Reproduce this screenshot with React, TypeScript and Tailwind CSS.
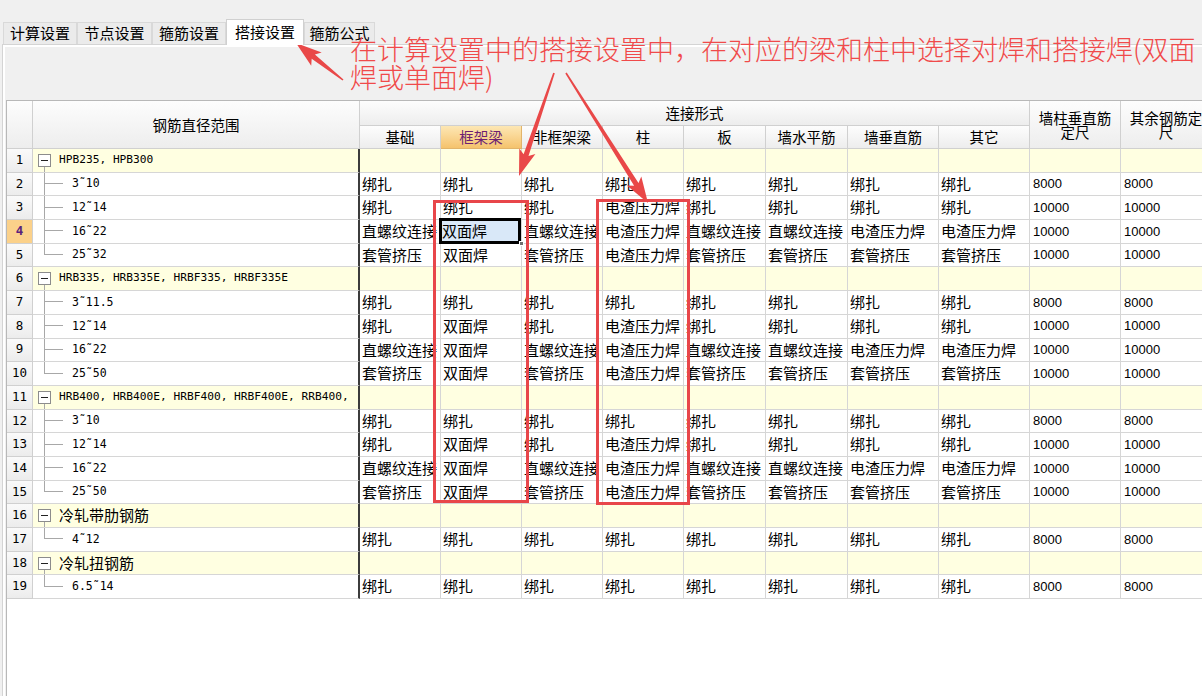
import React from "react";

type Row = {
  n: number;
  label: string;
  group?: boolean;
  cjk?: boolean;
  last?: boolean;
  cells?: string[];
  nums?: [string, string];
};

const B = "绑扎";
const Z = "直螺纹连接";
const T = "套管挤压";
const D = "电渣压力焊";
const S = "双面焊";

const rows: Row[] = [
  { n: 1, label: "HPB235, HPB300", group: true },
  { n: 2, label: "3˜10", cells: [B, B, B, B, B, B, B, B], nums: ["8000", "8000"] },
  { n: 3, label: "12˜14", cells: [B, B, B, D, B, B, B, B], nums: ["10000", "10000"] },
  { n: 4, label: "16˜22", cells: [Z, S, Z, D, Z, Z, D, D], nums: ["10000", "10000"] },
  { n: 5, label: "25˜32", last: true, cells: [T, S, T, D, T, T, T, T], nums: ["10000", "10000"] },
  { n: 6, label: "HRB335, HRB335E, HRBF335, HRBF335E", group: true },
  { n: 7, label: "3˜11.5", cells: [B, B, B, B, B, B, B, B], nums: ["8000", "8000"] },
  { n: 8, label: "12˜14", cells: [B, S, B, D, B, B, B, B], nums: ["10000", "10000"] },
  { n: 9, label: "16˜22", cells: [Z, S, Z, D, Z, Z, D, D], nums: ["10000", "10000"] },
  { n: 10, label: "25˜50", last: true, cells: [T, S, T, D, T, T, T, T], nums: ["10000", "10000"] },
  { n: 11, label: "HRB400, HRB400E, HRBF400, HRBF400E, RRB400,", group: true },
  { n: 12, label: "3˜10", cells: [B, B, B, B, B, B, B, B], nums: ["8000", "8000"] },
  { n: 13, label: "12˜14", cells: [B, S, B, D, B, B, B, B], nums: ["10000", "10000"] },
  { n: 14, label: "16˜22", cells: [Z, S, Z, D, Z, Z, D, D], nums: ["10000", "10000"] },
  { n: 15, label: "25˜50", last: true, cells: [T, S, T, D, T, T, T, T], nums: ["10000", "10000"] },
  { n: 16, label: "冷轧带肋钢筋", group: true, cjk: true },
  { n: 17, label: "4˜12", last: true, cells: [B, B, B, B, B, B, B, B], nums: ["8000", "8000"] },
  { n: 18, label: "冷轧扭钢筋", group: true, cjk: true },
  { n: 19, label: "6.5˜14", last: true, cells: [B, B, B, B, B, B, B, B], nums: ["8000", "8000"] },
];

const tabs = [
  { t: "计算设置", w: "w-[74px]" },
  { t: "节点设置", w: "w-[75px]" },
  { t: "箍筋设置", w: "w-[74px]" },
  { t: "搭接设置", w: "w-[78px]", on: true },
  { t: "箍筋公式", w: "w-[71px]" },
];

const subHeads = ["基础", "框架梁", "非框架梁", "柱", "板", "墙水平筋", "墙垂直筋", "其它"];

const cell = "border-r border-b border-[#d6d6d6] overflow-hidden whitespace-nowrap";
const head = "border-r border-b border-[#d0d0d0] bg-linear-to-b from-[#fdfdfd] to-[#ededed] text-[14.5px] flex items-center justify-center overflow-hidden";
const mono = "font-['DejaVu_Sans_Mono',monospace]";

// tapered arrow, tail -> tip
function arrow(x1: number, y1: number, x2: number, y2: number) {
  const dx = x2 - x1;
  const dy = y2 - y1;
  const len = Math.hypot(dx, dy);
  const ux = dx / len;
  const uy = dy / len;
  const px = -uy;
  const py = ux;
  const head = 22;
  const bx = x2 - ux * head;
  const by = y2 - uy * head;
  const wx = x2 - ux * (head + 4);
  const wy = y2 - uy * (head + 4);
  const pts = [
    [x1 + px * 0.8, y1 + py * 0.8],
    [bx + px * 2.6, by + py * 2.6],
    [wx + px * 8.5, wy + py * 8.5],
    [x2, y2],
    [wx - px * 8.5, wy - py * 8.5],
    [bx - px * 2.6, by - py * 2.6],
    [x1 - px * 0.8, y1 - py * 0.8],
  ];
  return pts.map((p) => p[0].toFixed(1) + "," + p[1].toFixed(1)).join(" ");
}

function TreeCell({ r }: { r: Row }) {
  if (r.group) {
    return (
      <div className="flex h-full">
        <div className="ml-[5px] flex w-[13px] shrink-0 flex-col items-center">
          <div className="h-[5px]" />
          <div className="flex h-[13px] w-[13px] items-center justify-center border border-[#8c8c8c] bg-white">
            <div className="h-px w-[7px] bg-[#222]" />
          </div>
          <div className="w-px flex-1 bg-[#a8a8a8]" />
        </div>
        <span
          className={
            "ml-[8px] self-center " +
            (r.cjk ? "text-[15px]" : mono + " text-[11.2px]")
          }
        >
          {r.label}
        </span>
      </div>
    );
  }
  return (
    <div className="flex h-full">
      <div className="w-[11px] shrink-0" />
      <div className="flex w-[19px] shrink-0 flex-col">
        <div className="h-1/2 border-b border-l border-[#a8a8a8]" />
        {!r.last && <div className="flex-1 border-l border-[#a8a8a8]" />}
      </div>
      <span className={"ml-[9px] self-center text-[11.5px] " + mono}>{r.label}</span>
    </div>
  );
}

export default function App() {
  return (
    <div className="relative h-[696px] w-[1202px] overflow-hidden bg-[#f0f0f0] font-['Noto_Sans_CJK_SC',sans-serif] text-black">
      {/* tabs */}
      <div className="flex h-[44px] items-end pl-[3px]">
        {tabs.map((t) =>
          t.on ? (
            <div
              key={t.t}
              className={
                "relative z-10 -mb-px flex h-[26px] items-center justify-center border-x border-t border-[#d0d0d0] bg-white text-[15px] " +
                t.w
              }
            >
              {t.t}
            </div>
          ) : (
            <div
              key={t.t}
              className={
                "flex h-[22px] items-center justify-center border-x border-t border-[#d9d9d9] bg-[#ebebeb] text-[15px] " +
                t.w
              }
            >
              {t.t}
            </div>
          )
        )}
      </div>

      {/* panel */}
      <div className="ml-[2px] h-[652px] border-l border-t border-[#d4d4d4]">
        <div className="h-full border-l-2 border-t-2 border-white pl-px pt-[53px]">
          <div className="h-full overflow-hidden border-l border-t border-[#b8b8b8] bg-white">
            <div className="grid w-[1206px] grid-cols-[26px_327px_81px_81px_81px_81px_82px_82px_91px_91px_91px_91px] grid-rows-[25px_23px] auto-rows-[23.7px]">
              <div className={head + " row-span-2"} />
              <div className={head + " row-span-2"}>钢筋直径范围</div>
              <div className={head + " col-span-8"}>连接形式</div>
              <div className={head + " row-span-2 px-[2px] text-center leading-[14px] whitespace-normal"}>墙柱垂直筋定尺</div>
              <div className={head + " row-span-2 px-[2px] text-center leading-[14px] whitespace-normal"}>其余钢筋定尺</div>
              {subHeads.map((h) =>
                h === "框架梁" ? (
                  <div
                    key={h}
                    className="flex items-center justify-center border-r border-b border-[#e2b46a] bg-linear-to-b from-[#fde7b4] to-[#f5c36c] text-[14.5px] text-[#6d1f72]"
                  >
                    {h}
                  </div>
                ) : (
                  <div key={h} className={head}>
                    {h}
                  </div>
                )
              )}

              {rows.map((r) => {
                const bg = r.group ? "bg-[#ffffe1]" : "bg-white";
                return (
                  <React.Fragment key={r.n}>
                    <div
                      className={
                        "flex items-center justify-center border-r border-b border-[#d0d0d0] text-[12.5px] " +
                        mono +
                        (r.n === 4
                          ? " bg-[#fbd18a] font-bold text-[#5a1f7c]"
                          : " bg-linear-to-b from-[#fafafa] to-[#ececec]")
                      }
                    >
                      {r.n}
                    </div>
                    <div className={"border-b border-r-2 border-[#d6d6d6] border-r-[#3c3c3c] " + bg}>
                      <TreeCell r={r} />
                    </div>
                    {Array.from({ length: 8 }).map((_, i) => {
                      const txt = r.cells ? r.cells[i] : "";
                      if (r.n === 4 && i === 1) {
                        return (
                          <div key={i} className={cell + " relative overflow-visible"}>
                            <div className="-ml-[2px] -mt-[2px] flex h-[calc(100%+3px)] w-[calc(100%+2px)] items-center border-[3px] border-black bg-[#d9e8f8] text-[15px]">
                              {txt}
                            </div>
                            <div className="absolute -bottom-[3px] -right-[3px] h-[5px] w-[5px] border border-white bg-[#6f6f6f]" />
                          </div>
                        );
                      }
                      return (
                        <div key={i} className={cell + " flex items-center pl-[2px] text-[15px] " + bg}>
                          {txt}
                        </div>
                      );
                    })}
                    {[0, 1].map((i) => (
                      <div
                        key={"n" + i}
                        className={cell + " flex items-center pl-[3px] font-['Liberation_Sans',sans-serif] text-[13px] " + bg}
                      >
                        {r.nums ? r.nums[i] : ""}
                      </div>
                    ))}
                  </React.Fragment>
                );
              })}
            </div>
          </div>
        </div>
      </div>

      {/* annotation */}
      <div className="pointer-events-none absolute left-[350px] top-[35px] whitespace-nowrap text-[27px] font-light leading-[28px] text-[#f04a4a]">
        在计算设置中的搭接设置中，在对应的梁和柱中选择对焊和搭接焊(双面
        <br />
        焊或单面焊)
      </div>
      <div className="pointer-events-none absolute left-[433px] top-[200px] h-[303px] w-[96px] border-[3px] border-[#e8464a]" />
      <div className="pointer-events-none absolute left-[596px] top-[199px] h-[306px] w-[94px] border-[3px] border-[#e8464a]" />
      <svg className="pointer-events-none absolute left-0 top-0" width="1202" height="696">
        <polygon points={arrow(343, 80, 296, 43)} fill="#e94848" />
        <polygon points={arrow(554, 73, 519, 176)} fill="#e94848" />
        <polygon points={arrow(566, 73, 648, 203)} fill="#e94848" />
      </svg>
    </div>
  );
}
